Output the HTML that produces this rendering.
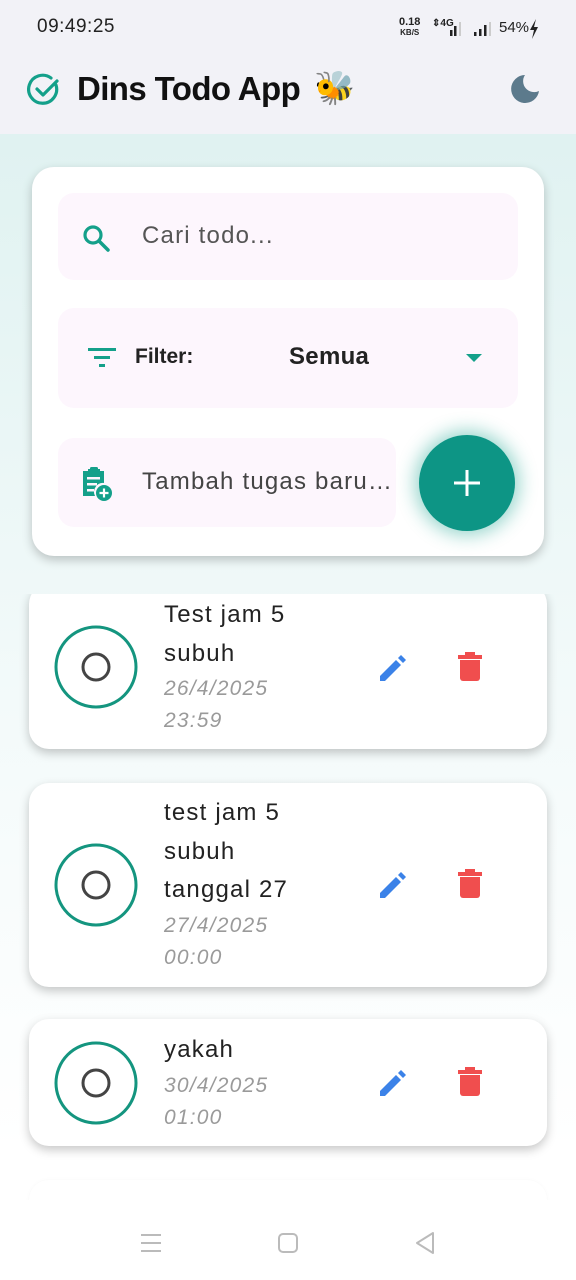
<!DOCTYPE html>
<html><head><meta charset="utf-8"><style>
*{margin:0;padding:0;box-sizing:border-box}
body{width:576px;height:1280px;overflow:hidden;font-family:"Liberation Sans",sans-serif;background:linear-gradient(#e0f2f1 140px,#f3fafa 700px,#fff 1150px);position:relative}
.abs{position:absolute}
.hdr{left:0;top:0;width:576px;height:134px;background:#f2f2f7}
.card{background:#fff;border-radius:22px;box-shadow:0 4px 10px rgba(0,0,0,.22)}
.field{background:#fdf6fd;border-radius:16px}
.t{font-size:24px;color:#222;letter-spacing:1.2px;line-height:38.5px}
.d{font-size:21px;color:#9a9a9a;font-style:italic;letter-spacing:1.2px;line-height:32px}
</style></head><body>
<div class="abs hdr">
 <div class="abs" style="left:37px;top:16px;font-size:19px;color:#222;letter-spacing:.5px">09:49:25</div>
 <div class="abs" style="left:399px;top:17px;font-size:11px;font-weight:bold;color:#222;line-height:10px;text-align:center">0.18<br><span style="font-size:8px">KB/S</span></div>
 <div class="abs" style="left:432px;top:18px;font-size:10px;color:#222;font-weight:bold">⇕4G</div>
 <svg class="abs" style="left:446px;top:20px" width="60" height="18"><rect x="4" y="10" width="2.5" height="6" fill="#222"/><rect x="8" y="6" width="2.5" height="10" fill="#222"/><rect x="13" y="2" width="2" height="14" fill="#ccc"/><rect x="28" y="12" width="2.5" height="4" fill="#222"/><rect x="33" y="9" width="2.5" height="7" fill="#222"/><rect x="38" y="5" width="2.5" height="11" fill="#222"/><rect x="43" y="2" width="2" height="14" fill="#ccc"/></svg>
 <div class="abs" style="left:499px;top:19px;font-size:15px;color:#222">54%</div>
 <svg class="abs" style="left:528px;top:18px" width="12" height="22"><path d="M8 1 L2 12 H6 L4 21 L10 9 H6 Z" fill="#222"/></svg>
 <svg class="abs" style="left:27px;top:73px" width="34" height="34" viewBox="0 0 34 34"><path d="M29 12 A14 14 0 1 1 24 5" fill="none" stroke="#14a08a" stroke-width="3.2" stroke-linecap="round"/><path d="M10 16 L16 22 L30 8" fill="none" stroke="#14a08a" stroke-width="3.2" stroke-linecap="round" stroke-linejoin="round"/></svg>
 <div class="abs" style="left:77px;top:70px;font-size:33px;font-weight:bold;color:#111;letter-spacing:-.6px">Dins Todo App</div>
 <div class="abs" style="left:314px;top:69px;font-size:33px">🐝</div>
 <svg class="abs" style="left:508px;top:72px" width="34" height="34" viewBox="0 0 34 34"><path d="M17 3 A14 14 0 1 0 31 19 A11 11 0 0 1 17 3 Z" fill="#5c7a8c"/></svg>
</div>

<div class="abs card" style="left:32px;top:167px;width:512px;height:389px"></div>
<div class="abs field" style="left:58px;top:193px;width:460px;height:87px"></div>
<svg class="abs" style="left:80px;top:222px" width="32" height="32" viewBox="0 0 32 32"><circle cx="13" cy="13" r="8" fill="none" stroke="#14a08a" stroke-width="3.2"/><path d="M19 19 L28 28" stroke="#14a08a" stroke-width="3.5" stroke-linecap="round"/></svg>
<div class="abs" style="left:142px;top:222px;font-size:24px;color:#555;letter-spacing:1.2px">Cari todo...</div>

<div class="abs field" style="left:58px;top:308px;width:460px;height:100px"></div>
<svg class="abs" style="left:86px;top:346px" width="32" height="24"><rect x="2" y="2" width="28" height="3" fill="#14a08a"/><rect x="8" y="10" width="16" height="3" fill="#14a08a"/><rect x="13" y="18" width="6" height="3" fill="#14a08a"/></svg>
<div class="abs" style="left:135px;top:345px;font-size:21px;font-weight:bold;color:#222">Filter:</div>
<div class="abs" style="left:289px;top:343px;font-size:24px;font-weight:bold;color:#222;letter-spacing:.3px">Semua</div>
<svg class="abs" style="left:464px;top:352px" width="20" height="12"><path d="M2 2 H18 L10 10 Z" fill="#14a08a"/></svg>

<div class="abs field" style="left:58px;top:438px;width:338px;height:89px"></div>
<svg class="abs" style="left:80px;top:465px" width="36" height="38" viewBox="0 0 36 38"><path d="M3 6 H8 V4 H20 V6 H24 V18 A9 9 0 0 0 15 31 H3 Z" fill="#14a08a"/><rect x="10" y="2" width="8" height="5" rx="1.5" fill="#14a08a"/><rect x="7" y="12" width="13" height="2.5" fill="#fdf6fd"/><rect x="7" y="18" width="10" height="2.5" fill="#fdf6fd"/><rect x="7" y="24" width="7" height="2.5" fill="#fdf6fd"/><circle cx="24" cy="28" r="8" fill="#14a08a"/><path d="M24 23.5 V32.5 M19.5 28 H28.5" stroke="#fff" stroke-width="2.2"/></svg>
<div class="abs" style="left:142px;top:468px;font-size:24px;color:#444;letter-spacing:1.2px;white-space:nowrap">Tambah tugas baru…</div>
<div class="abs" style="left:419px;top:435px;width:96px;height:96px;border-radius:50%;background:#0d9585;box-shadow:0 0 18px 4px rgba(20,160,140,.45)"></div>
<svg class="abs" style="left:452px;top:468px" width="30" height="30"><path d="M15 2 V28 M2 15 H28" stroke="#fff" stroke-width="3"/></svg>

<div class="abs" style="left:0;top:594px;width:576px;height:620px;overflow:hidden">
 <div class="abs card" style="left:29px;top:-10px;width:518px;height:165px;border-radius:20px"></div>
 <div class="abs card" style="left:29px;top:189px;width:518px;height:204px;border-radius:20px"></div>
 <div class="abs card" style="left:29px;top:425px;width:518px;height:127px;border-radius:20px"></div>
 <div class="abs" style="left:29px;top:586px;width:518px;height:60px;border-radius:20px;background:#fff;box-shadow:0 0 4px rgba(0,0,0,.03)"></div>
</div>

<svg class="abs" style="left:54px;top:625px" width="84" height="84"><circle cx="42" cy="42" r="40" fill="none" stroke="#14957f" stroke-width="3"/><circle cx="42" cy="42" r="13" fill="none" stroke="#444" stroke-width="3"/></svg>
<div class="abs" style="left:164px;top:596px"><div class="t">Test jam 5</div><div class="t">subuh</div><div class="d">26/4/2025</div><div class="d">23:59</div></div>

<svg class="abs" style="left:54px;top:843px" width="84" height="84"><circle cx="42" cy="42" r="40" fill="none" stroke="#14957f" stroke-width="3"/><circle cx="42" cy="42" r="13" fill="none" stroke="#444" stroke-width="3"/></svg>
<div class="abs" style="left:164px;top:794px"><div class="t">test jam 5</div><div class="t">subuh</div><div class="t">tanggal 27</div><div class="d">27/4/2025</div><div class="d">00:00</div></div>

<svg class="abs" style="left:54px;top:1041px" width="84" height="84"><circle cx="42" cy="42" r="40" fill="none" stroke="#14957f" stroke-width="3"/><circle cx="42" cy="42" r="13" fill="none" stroke="#444" stroke-width="3"/></svg>
<div class="abs" style="left:164px;top:1031px"><div class="t">yakah</div><div class="d">30/4/2025</div><div class="d">01:00</div></div>

<svg width="0" height="0" style="position:absolute"><defs>
<g id="ed"><path d="M3 25 V30 H8 L24 14 L19 9 Z" fill="#3b82e8"/><path d="M21 7 L24 4 L29 9 L26 12 Z" fill="#3b82e8"/></g>
<g id="dl"><rect x="2" y="4" width="24" height="4" fill="#f04e4e"/><rect x="9" y="1" width="10" height="4" fill="#f04e4e"/><path d="M4 9 H24 V27 A3 3 0 0 1 21 30 H7 A3 3 0 0 1 4 27 Z" fill="#f04e4e"/></g>
</defs></svg>
<svg class="abs" style="left:377px;top:651px" width="32" height="32"><use href="#ed"/></svg>
<svg class="abs" style="left:456px;top:651px" width="28" height="32"><use href="#dl"/></svg>
<svg class="abs" style="left:377px;top:868px" width="32" height="32"><use href="#ed"/></svg>
<svg class="abs" style="left:456px;top:868px" width="28" height="32"><use href="#dl"/></svg>
<svg class="abs" style="left:377px;top:1066px" width="32" height="32"><use href="#ed"/></svg>
<svg class="abs" style="left:456px;top:1066px" width="28" height="32"><use href="#dl"/></svg>

<div class="abs" style="left:0;top:1200px;width:576px;height:80px;background:#fff"></div>
<svg class="abs" style="left:0;top:1225px" width="576" height="40"><path d="M141 10 H161 M141 18 H161 M141 26 H161" stroke="#bbb" stroke-width="2"/><rect x="279" y="9" width="18" height="18" rx="4" fill="none" stroke="#bbb" stroke-width="2"/><path d="M433 8 L417 18 L433 28 Z" fill="none" stroke="#bbb" stroke-width="2" stroke-linejoin="round"/></svg>
</body></html>
